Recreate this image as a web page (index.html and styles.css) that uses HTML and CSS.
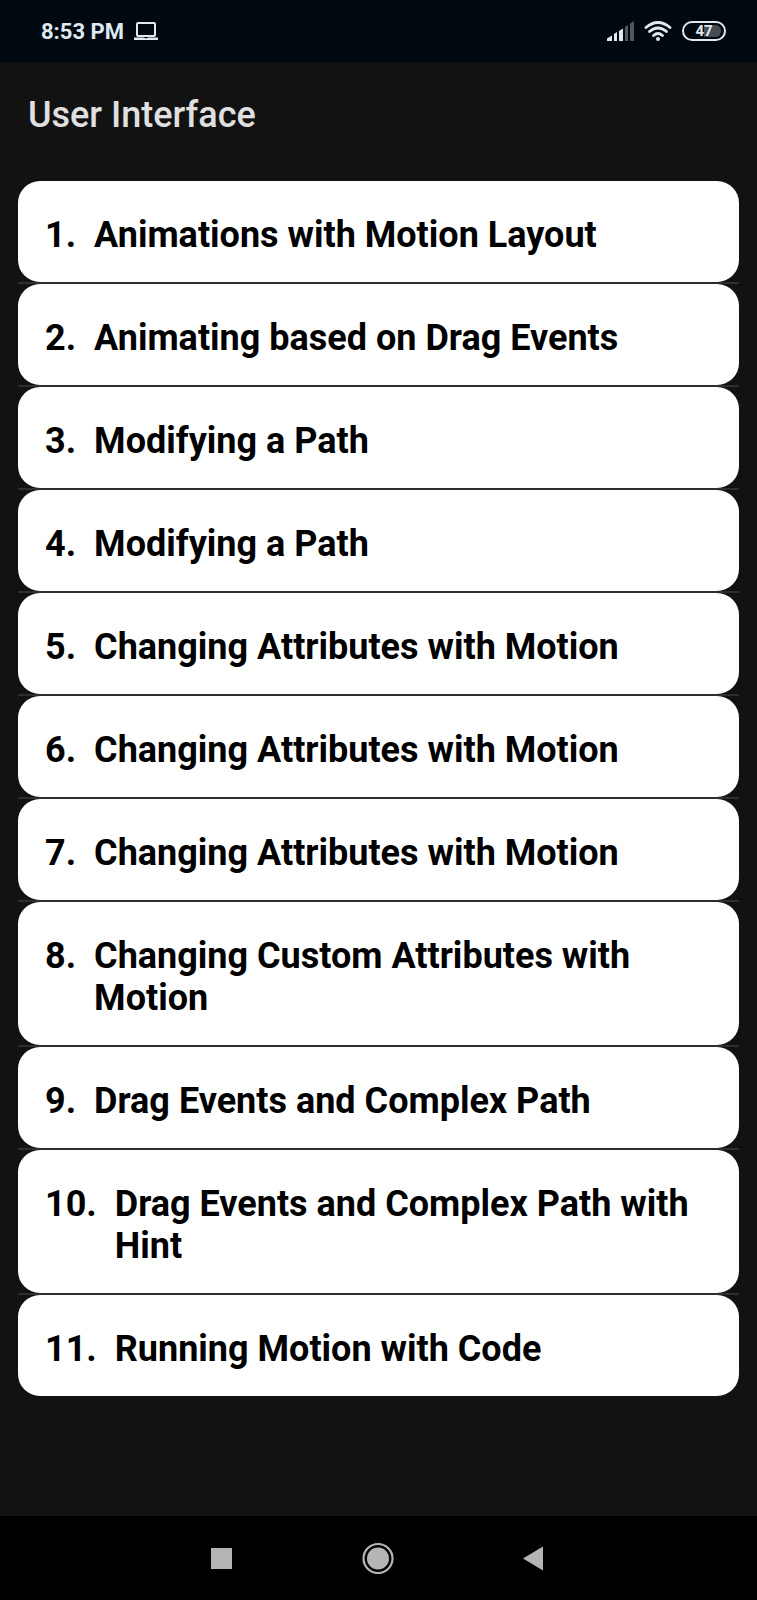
FILE: index.html
```html
<!DOCTYPE html>
<html lang="en">
<head>
<meta charset="utf-8">
<meta name="viewport" content="width=device-width, initial-scale=1">
<title>User Interface</title>
<link rel="stylesheet" href="styles.css">
</head>
<body>
<div class="screen">
  <header class="status-bar">
    <div class="status-group">
      <time class="clock">8:53 PM</time>
      <svg class="laptop-icon" width="24" height="18" viewBox="0 0 24 18" aria-hidden="true">
        <rect x="3" y="1" width="18" height="13" rx="1" fill="none" stroke="#dfe9f0" stroke-width="2"/>
        <path d="M0 15.500h10l1 .8h2l1-.8h10V18H0z" fill="#dfe9f0"/>
      </svg>
    </div>
    <div class="status-group">
      <svg width="27" height="20" viewBox="0 0 27 20" aria-hidden="true">
        <path d="M0 20v-2.500l5-3V20z M7 20v-7l3-2v9z M12 20v-10l4-2.500v12.500z" fill="#dfe9f0"/>
        <path d="M18 20V6l3-2v16z M23 20V2.500l4-2.500v20z" fill="#4f5861"/>
      </svg>
      <svg width="28" height="20" viewBox="0 0 28 20" aria-hidden="true">
        <g fill="none" stroke="#dfe9f0" stroke-width="2.800" stroke-linecap="round">
          <path d="M2 6.500Q14-3.500 26 6.500"/>
          <path d="M5.500 10.500Q14 3.500 22.500 10.500"/>
          <path d="M9.500 14.500Q14 10.500 18.500 14.500"/>
        </g>
        <circle cx="14" cy="18" r="2" fill="#dfe9f0"/>
      </svg>
      <span class="battery">47</span>
    </div>
  </header>

  <main class="content">
    <h1 class="title">User Interface</h1>
    <ol class="list">
      <li class="row"><button class="card" type="button"><span>1.</span><span>Animations with Motion Layout</span></button></li>
      <li class="row"><button class="card" type="button"><span>2.</span><span>Animating based on Drag Events</span></button></li>
      <li class="row"><button class="card" type="button"><span>3.</span><span>Modifying a Path</span></button></li>
      <li class="row"><button class="card" type="button"><span>4.</span><span>Modifying a Path</span></button></li>
      <li class="row"><button class="card" type="button"><span>5.</span><span>Changing Attributes with Motion</span></button></li>
      <li class="row"><button class="card" type="button"><span>6.</span><span>Changing Attributes with Motion</span></button></li>
      <li class="row"><button class="card" type="button"><span>7.</span><span>Changing Attributes with Motion</span></button></li>
      <li class="row"><button class="card" type="button"><span>8.</span><span>Changing Custom Attributes with Motion</span></button></li>
      <li class="row"><button class="card" type="button"><span>9.</span><span>Drag Events and Complex Path</span></button></li>
      <li class="row"><button class="card" type="button"><span>10.</span><span>Drag Events and Complex Path with Hint</span></button></li>
      <li class="row"><button class="card" type="button"><span>11.</span><span>Running Motion with Code</span></button></li>
    </ol>
  </main>

  <nav class="nav-bar" aria-label="System navigation">
    <button class="nav-button" type="button" aria-label="Recent apps">
      <svg width="32" height="32" viewBox="0 0 32 32"><rect x="5" y="6" width="21" height="21" fill="#b5b5b5"/></svg>
    </button>
    <button class="nav-button" type="button" aria-label="Home">
      <svg width="32" height="32" viewBox="0 0 32 32"><circle cx="16" cy="16.500" r="14.500" fill="none" stroke="#b5b5b5" stroke-width="2.200"/><circle cx="16" cy="16.500" r="11" fill="#b5b5b5"/></svg>
    </button>
    <button class="nav-button" type="button" aria-label="Back">
      <svg width="32" height="32" viewBox="0 0 32 32"><path d="M4 16.500L24 4.500v24z" fill="#b5b5b5"/></svg>
    </button>
  </nav>
</div>
</body>
</html>
```
FILE: styles.css
```css
* {
  box-sizing: border-box;
}

body {
  margin: 0;
  background: #121212;
  font-family: Roboto, "Liberation Sans", sans-serif;
}

button {
  border: 0;
  margin: 0;
  font: inherit;
  cursor: pointer;
}

svg {
  display: block;
}

.screen {
  display: flex;
  flex-direction: column;
  min-height: 100vh;
}

.status-bar {
  display: flex;
  align-items: center;
  justify-content: space-between;
  height: 62px;
  padding: 0 31px 0 41px;
  background: #000810;
  color: #dfe9f0;
}

.status-group {
  display: flex;
  align-items: center;
  gap: 10px;
}

.clock {
  padding-top: 2px;
  font-size: 22px;
  font-weight: 700;
  line-height: 28px;
}

.battery {
  width: 44px;
  height: 20px;
  border: 2px solid #dfe9f0;
  border-radius: 10px;
  background: linear-gradient(90deg, #000810 50%, #454c54 50%);
  background-clip: content-box;
  padding: 2px 3px;
  font-size: 15px;
  font-weight: 700;
  line-height: 12px;
  text-align: center;
}

.content {
  flex: 1;
  padding: 0 18px;
}

.title {
  margin: 0;
  padding: 32px 10px 45px;
  color: #e0e0e0;
  font-size: 36px;
  font-weight: 500;
  line-height: 42px;
}

.list {
  margin: 0;
  padding: 0;
  list-style: none;
}

.row + .row {
  border-top: 2px solid #2e2e2e;
}

.card {
  display: flex;
  gap: 18px;
  width: 100%;
  padding: 33px 27px 26px;
  border-radius: 22px;
  background: #fff;
  color: #000;
  font-size: 36px;
  font-weight: 700;
  line-height: 42px;
  text-align: left;
}

.nav-bar {
  display: grid;
  grid-template-columns: repeat(3, 1fr);
  align-items: center;
  height: 84px;
  padding: 0 19%;
  background: #000;
}

.nav-button {
  display: flex;
  justify-content: center;
  padding: 0;
  background: transparent;
}
```
